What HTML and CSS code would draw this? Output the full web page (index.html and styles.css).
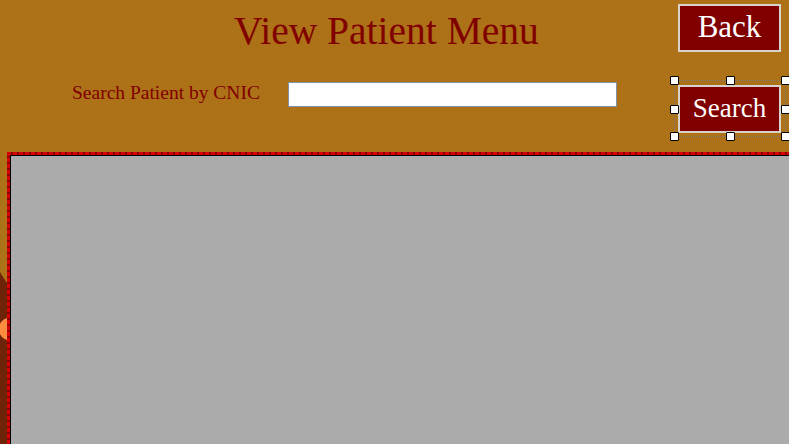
FILE: index.html
```html
<!DOCTYPE html>
<html>
<head>
<meta charset="utf-8">
<title>View Patient Menu</title>
<link rel="stylesheet" href="styles.css">
</head>
<body>
<div class="page">
  <div class="row-top">
    <h1 class="title">View Patient Menu</h1>
    <button class="btn back">Back</button>
  </div>
  <div class="row-search">
    <label class="label" for="cnic">Search Patient by CNIC</label>
    <input class="field" id="cnic" type="text">
    <div class="sel">
      <button class="btn search">Search</button>
      <span class="h tl"></span><span class="h tc"></span><span class="h tr"></span>
      <span class="h ml"></span><span class="h mr"></span>
      <span class="h bl"></span><span class="h bc"></span><span class="h br"></span>
    </div>
  </div>
  <div class="row-panel">
    <div class="strip">
      <svg width="7" height="300" viewBox="0 0 7 300">
        <polygon points="0,120 3,125 7,131 7,300 0,300" fill="#6e2408"/>
        <circle cx="10.4" cy="177" r="11.5" fill="#ff8b3e"/>
      </svg>
    </div>
    <div class="panel">
      <div class="panel-inner"></div>
    </div>
  </div>
</div>
</body>
</html>
```

FILE: styles.css
```css
html, body {
  margin: 0;
  padding: 0;
  height: 100%;
  overflow: hidden;
}
body {
  background: #ad7118;
  font-family: "Liberation Serif", "Times New Roman", serif;
}
.page {
  width: 789px;
  height: 444px;
  overflow: hidden;
}
.row-top {
  display: flex;
  align-items: flex-start;
  height: 52px;
}
.title {
  margin: 11px 0 0 234px;
  font-size: 39.5px;
  line-height: 40px;
  font-weight: normal;
  color: #800000;
  white-space: nowrap;
}
.btn {
  box-sizing: border-box;
  width: 103px;
  height: 48px;
  padding: 0 0 2px 0;
  border: 2px solid #d8d4cc;
  background: #800000;
  color: #ffffff;
  font-family: "Liberation Serif", "Times New Roman", serif;
  line-height: 42px;
  text-align: center;
  cursor: pointer;
}
.back {
  margin: 4px 8px 0 auto;
  font-size: 31px;
}
.search {
  display: block;
  font-size: 27px;
}
.row-search {
  display: flex;
  align-items: flex-start;
  height: 85px;
}
.label {
  box-sizing: border-box;
  width: 288px;
  padding-left: 72px;
  margin-top: 30px;
  font-size: 19.5px;
  line-height: 22px;
  color: #800000;
  white-space: nowrap;
}
.field {
  box-sizing: border-box;
  width: 329px;
  height: 25px;
  margin: 30px 0 0 0;
  padding: 0 3px;
  border: 1px solid #7f92aa;
  background: #ffffff;
  outline: none;
}
.sel {
  position: relative;
  margin: 28px 3px 0 auto;
  padding: 4px 4px 3px 3px;
  border: 1px dotted #7a7a7a;
}
.h {
  position: absolute;
  box-sizing: border-box;
  width: 9px;
  height: 9px;
  background: #ffffff;
  border: 1px solid #000000;
  border-radius: 1px;
}
.tl { left: -5px; top: -5px; }
.tc { left: calc(50% - 4px); top: -5px; }
.tr { right: -5px; top: -5px; }
.ml { left: -5px; top: calc(50% - 4px); }
.mr { right: -5px; top: calc(50% - 4px); }
.bl { left: -5px; bottom: -5px; }
.bc { left: calc(50% - 4px); bottom: -5px; }
.br { right: -5px; bottom: -5px; }
.row-panel {
  display: flex;
  margin-top: 15px;
}
.strip {
  width: 7px;
  flex: none;
  line-height: 0;
}
.panel {
  box-sizing: border-box;
  width: 800px;
  height: 320px;
  flex: none;
  padding: 3px 0 0 3px;
  background:
    repeating-linear-gradient(90deg, #d80000 0 4px, #8a0000 4px 6px) left top / 100% 3px no-repeat,
    repeating-linear-gradient(180deg, #d80000 0 4px, #8a0000 4px 6px) left top / 3px 100% no-repeat,
    #8a0000;
}
.panel-inner {
  height: 100%;
  border-top: 1px solid #000000;
  border-left: 1px solid #000000;
  background: #ababab;
}
```
